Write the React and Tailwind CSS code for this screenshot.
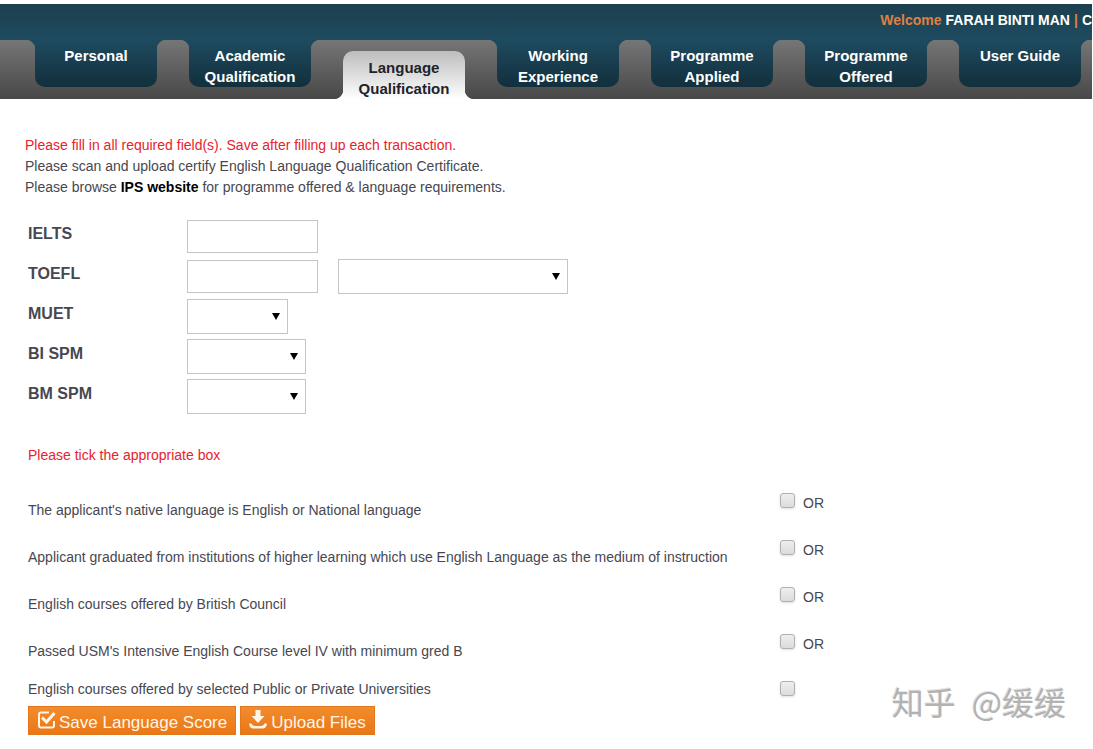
import { useState } from 'react'

const TABS = [
  ['Personal'],
  ['Academic', 'Qualification'],
  ['Language', 'Qualification'],
  ['Working', 'Experience'],
  ['Programme', 'Applied'],
  ['Programme', 'Offered'],
  ['User Guide'],
]

const OPTIONS = [
  "The applicant's native language is English or National language",
  'Applicant graduated from institutions of higher learning which use English Language as the medium of instruction',
  'English courses offered by British Council',
  "Passed USM's Intensive English Course level IV with minimum gred B",
  'English courses offered by selected Public or Private Universities',
]

export default function App() {
  const [active, setActive] = useState(2)

  return (
    <div className="relative min-h-screen overflow-x-hidden bg-white pt-1 font-['Liberation_Sans',Arial,sans-serif] text-[14px] text-[#474750]">
      <header className="mr-px">
        <div className="flex h-9 items-center justify-end gap-1 overflow-hidden whitespace-nowrap bg-linear-to-b from-[#1c3f4f] to-[#1e4b60] pb-1 font-bold text-white">
          <span className="text-[#dd8145]">Welcome</span>
          <span>FARAH BINTI MAN</span>
          <span className="text-[#dd8145]">|</span>
          <a href="#account">C</a>
        </div>
        <nav className="flex h-[59px] gap-8 overflow-hidden bg-linear-to-b from-[#767676] to-[#484848] pl-[35px]">
          {TABS.map((lines, i) => (
            <Tab key={i} lines={lines} active={i === active} onClick={() => setActive(i)} />
          ))}
        </nav>
      </header>

      <main className="px-[25px] pt-9">
        <div className="leading-[21px]">
          <p className="text-[#e8222e]">Please fill in all required field(s). Save after filling up each transaction.</p>
          <p>Please scan and upload certify English Language Qualification Certificate.</p>
          <p>
            Please browse <a href="#ips" className="font-bold text-black">IPS website</a> for programme offered &amp; language requirements.
          </p>
        </div>

        <form className="pl-[3px] pt-[18px]" onSubmit={(e) => e.preventDefault()}>
          <Field id="ielts" label="IELTS">
            <TextBox id="ielts" />
          </Field>
          <Field id="toefl" label="TOEFL">
            <TextBox id="toefl" />
            <Select aria-label="TOEFL type" className="w-[230px]" />
          </Field>
          <Field id="muet" label="MUET">
            <Select id="muet" className="w-[101px]" />
          </Field>
          <Field id="bi-spm" label="BI SPM">
            <Select id="bi-spm" className="w-[119px]" />
          </Field>
          <Field id="bm-spm" label="BM SPM">
            <Select id="bm-spm" className="w-[119px]" />
          </Field>

          <p className="pt-[29px] leading-[21px] text-[#e8222e]">Please tick the appropriate box</p>

          <div className="pt-[27px]">
            {OPTIONS.map((text, i) => {
              const last = i === OPTIONS.length - 1
              return (
                <div key={i} className={`flex items-start ${last ? 'h-[25px]' : 'h-[47px]'}`}>
                  <label htmlFor={`option-${i}`} className={`w-[752px] leading-4 ${last ? '' : 'pt-[9px]'}`}>{text}</label>
                  <input
                    id={`option-${i}`}
                    type="checkbox"
                    className="size-[15px] appearance-none rounded-[3px] border border-[#b0b0b0] bg-linear-to-b from-[#eeeeee] to-[#dcdcdc] shadow-sm checked:bg-gray-500"
                  />
                  {!last && <span className="pl-2 pt-0.5 leading-4">OR</span>}
                </div>
              )
            })}
          </div>

          <div className="flex gap-1">
            <ActionButton icon={<CheckIcon />}>Save Language Score</ActionButton>
            <ActionButton icon={<DownloadIcon />}>Upload Files</ActionButton>
          </div>
        </form>
      </main>

      <div className="pointer-events-none absolute right-[27px] bottom-7 flex gap-4 font-['Noto_Sans_CJK_SC',sans-serif] text-[32px] leading-10 whitespace-nowrap text-[#b2b2b2] [text-shadow:-1px_-1px_0_#e4e4e4]">
        <span>知乎</span>
        <span>@缓缓</span>
      </div>
    </div>
  )
}

function Tab({ lines, active, onClick }) {
  // the small squares beside each tab draw its outward curves
  const look = active
    ? 'mt-[11px] h-12 rounded-t-[10px] bg-linear-to-b from-[#bdbdbd] to-white pt-[6px] text-[#22222a] before:bottom-0 before:bg-[radial-gradient(circle_at_0_0,transparent_10px,#fff_11px)] after:bottom-0 after:bg-[radial-gradient(circle_at_100%_0,transparent_10px,#fff_11px)]'
    : 'h-[47px] rounded-b-[10px] bg-linear-to-b from-[#1e4b60] to-[#122f3c] pt-[5px] text-white before:top-0 before:bg-[radial-gradient(circle_at_0_100%,transparent_10px,#1e495d_11px)] after:top-0 after:bg-[radial-gradient(circle_at_100%_100%,transparent_10px,#1e495d_11px)]'

  return (
    <button
      type="button"
      onClick={onClick}
      className={`relative flex w-[122px] shrink-0 flex-col items-center text-[15px] leading-[21px] font-bold before:absolute before:right-full before:size-[10px] after:absolute after:left-full after:size-[10px] ${look}`}
    >
      {lines.map((line) => <span key={line}>{line}</span>)}
    </button>
  )
}

function Field({ id, label, children }) {
  return (
    <div className="flex h-10 items-center">
      <label htmlFor={id} className="w-[159px] pb-1 text-[16px] font-bold">{label}</label>
      <div className="flex items-center gap-5">{children}</div>
    </div>
  )
}

function TextBox({ id }) {
  return <input id={id} type="text" className="h-[33px] w-[131px] border border-[#c6c6c0] bg-white px-2" />
}

function Select({ className, ...props }) {
  return (
    <div className={`relative ${className}`}>
      <select {...props} className="block h-[35px] w-full appearance-none border border-[#c6c6c0] bg-white px-2">
        <option></option>
      </select>
      <svg className="pointer-events-none absolute top-[14px] right-2 h-[7px] w-2" viewBox="0 0 8 7">
        <path d="M0 0h8L4 7z" fill="#000" />
      </svg>
    </div>
  )
}

function ActionButton({ icon, children }) {
  return (
    <button type="submit" className="flex h-[29px] items-start gap-0.5 border border-[#e2781d] bg-linear-to-b from-[#f28c2c] to-[#ea7716] px-2 text-[17px] leading-[31px] text-[#fff6e8]">
      {icon}
      <span>{children}</span>
    </button>
  )
}

function CheckIcon() {
  return (
    <svg className="mt-[3px] size-5" viewBox="0 0 20 20" fill="none" stroke="#fff6e8">
      <path d="M12 2.500H4Q2 2.500 2 4.500v11Q2 17.500 4 17.500h11q2 0 2-2V11" strokeWidth="2" />
      <path d="M5 7.500l4.500 4.500L17.500 3" strokeWidth="3" />
    </svg>
  )
}

function DownloadIcon() {
  return (
    <svg className="mt-[3px] size-5" viewBox="0 0 20 20" fill="#fff6e8">
      <path d="M6.500 0h5v6h4l-6.500 7-6.500-7h4z" />
      <path d="M0 13.500h2.500q1 2.500 3.500 2.500h6q2.500 0 3.500-2.500H18q-.5 5-4.500 5h-9q-4 0-4.500-5z" />
    </svg>
  )
}
